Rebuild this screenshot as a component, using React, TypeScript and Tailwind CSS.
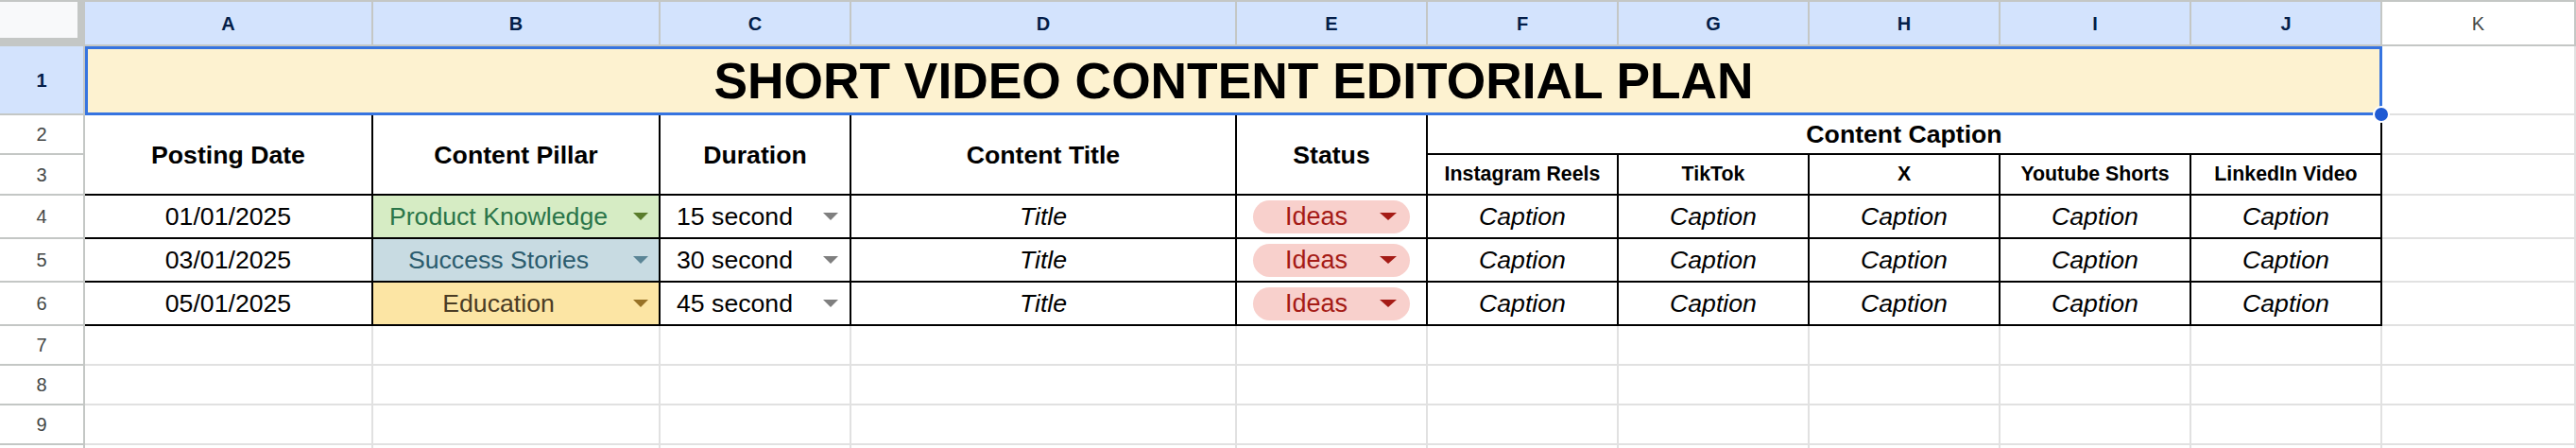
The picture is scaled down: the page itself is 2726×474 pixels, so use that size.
type Pillar = {
  label: string
  bg: string
  text: string
  arrow: string
}

const rows = [
  {
    date: '01/01/2025',
    pillar: { label: 'Product Knowledge', bg: 'bg-[#d6ecc4]', text: 'text-[#2a7549]', arrow: 'fill-[#5a7d2c]' },
    duration: '15 second',
  },
  {
    date: '03/01/2025',
    pillar: { label: 'Success Stories', bg: 'bg-[#c8dbe2]', text: 'text-[#2b5c6e]', arrow: 'fill-[#5b8596]' },
    duration: '30 second',
  },
  {
    date: '05/01/2025',
    pillar: { label: 'Education', bg: 'bg-[#fce5a4]', text: 'text-[#4a3c24]', arrow: 'fill-[#987226]' },
    duration: '45 second',
  },
]

const platforms = ['Instagram Reels', 'TikTok', 'X', 'Youtube Shorts', 'LinkedIn Video']
const letters = ['A', 'B', 'C', 'D', 'E', 'F', 'G', 'H', 'I', 'J']

const Arrow = ({ className, w = 16 }: { className: string; w?: number }) => (
  <svg width={w} height={8} viewBox={`0 0 ${w} 8`} className={className}>
    <path d={`M0 0H${w}L${w / 2} 8Z`} />
  </svg>
)

const RowHead = ({ n, active = false }: { n?: number; active?: boolean }) => (
  <div
    className={`flex items-center justify-center border-r-2 border-b-2 border-[#c4c7c5] text-[20px] ${
      active ? 'bg-[#d3e3fd] font-bold text-[#041e49]' : 'bg-white text-[#444746]'
    }`}
  >
    {n}
  </div>
)

const Blank = () => <div className="border-r-2 border-b-2 border-[#e1e1e1]" />

const Cell = ({ children, className = '' }: { children?: React.ReactNode; className?: string }) => (
  <div className={`flex items-center justify-center border-r-2 border-b-2 border-black ${className}`}>{children}</div>
)

const PillarCell = ({ pillar }: { pillar: Pillar }) => (
  <div className={`flex items-center border-r-2 border-b-2 border-black ${pillar.bg}`}>
    <span className={`flex-1 text-center pr-[10px] text-[26.67px] ${pillar.text}`}>{pillar.label}</span>
    <Arrow className={`mr-[11px] ${pillar.arrow}`} />
  </div>
)

const App = () => {
  return (
    <div className="h-[474px] w-[2726px] overflow-hidden bg-white font-['Liberation_Sans',Arial,sans-serif] text-black">
      <div className="grid grid-cols-[90px_305px_304px_202px_408px_202px_202px_202px_202px_202px_202px_205px] grid-rows-[49px_73px_42px_43px_46px_46px_46px_42px_42px_42px_42px]">
        {/* column headers */}
        <div className="border-t-2 border-[#c4c7c5] bg-[#c4c7c5]">
          <div className="h-[38px] w-[82px] bg-[#f8f9fa]" />
        </div>
        {letters.map((l) => (
          <div
            key={l}
            className="flex items-center justify-center border-t-2 border-r-2 border-b-2 border-[#c4c7c5] bg-[#d3e3fd] text-[20px] font-bold text-[#041e49]"
          >
            {l}
          </div>
        ))}
        <div className="flex items-center justify-center border-t-2 border-r-2 border-b-2 border-[#c4c7c5] bg-white text-[20px] text-[#444746]">
          K
        </div>

        {/* row 1 */}
        <RowHead n={1} active />
        <div className="relative col-span-10 flex items-center justify-center border-[3px] border-[#3674e0] bg-[#fdf2d0]">
          <span className="text-[53.33px] font-bold leading-none">SHORT VIDEO CONTENT EDITORIAL PLAN</span>
          <div className="absolute -right-[11px] -bottom-[11px] z-10 h-[18px] w-[18px] rounded-full border-2 border-white bg-[#1f5ad3]" />
        </div>
        <Blank />

        {/* rows 2-3 */}
        <RowHead n={2} />
        {['Posting Date', 'Content Pillar', 'Duration', 'Content Title', 'Status'].map((h) => (
          <Cell key={h} className="row-span-2 text-[26.67px] font-bold">
            {h}
          </Cell>
        ))}
        <Cell className="col-span-5 text-[26.67px] font-bold">Content Caption</Cell>
        <Blank />
        <RowHead n={3} />
        {platforms.map((p) => (
          <Cell key={p} className="text-[21.33px] font-bold">
            {p}
          </Cell>
        ))}
        <Blank />

        {/* data rows */}
        {rows.map((r, i) => (
          <div key={r.date} className="contents">
            <RowHead n={i + 4} />
            <Cell className="text-[26.67px]">{r.date}</Cell>
            <PillarCell pillar={r.pillar} />
            <div className="flex items-center border-r-2 border-b-2 border-black">
              <span className="flex-1 pl-[17px] text-[26.67px]">{r.duration}</span>
              <Arrow className="mr-[12px] fill-[#7f7f7f]" />
            </div>
            <Cell className="text-[26.67px] italic">Title</Cell>
            <Cell className="px-[17px]">
              <div className="flex h-[35px] w-full items-center rounded-full bg-[#f8d0cc]">
                <span className="flex-1 text-center text-[27px] text-[#a51b16]">Ideas</span>
                <Arrow w={18} className="mr-[14px] fill-[#a51b16]" />
              </div>
            </Cell>
            {platforms.map((p) => (
              <Cell key={p} className="text-[26.67px] italic">
                Caption
              </Cell>
            ))}
            <Blank />
          </div>
        ))}

        {/* empty rows; the last one only peeks in at the bottom edge */}
        {[7, 8, 9, 10].map((n) => (
          <div key={n} className="contents">
            <RowHead n={n < 10 ? n : undefined} />
            {Array.from({ length: 11 }).map((_, j) => (
              <Blank key={j} />
            ))}
          </div>
        ))}
      </div>
    </div>
  )
}

export default App
